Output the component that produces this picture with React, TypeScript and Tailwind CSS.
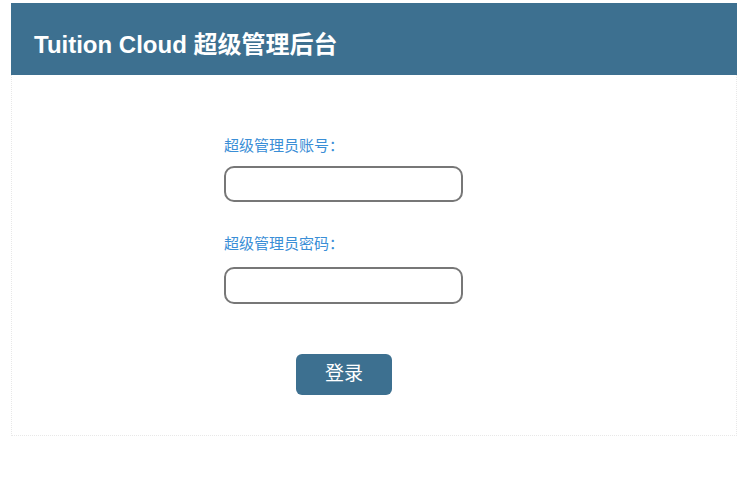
import React, { useState } from 'react';

export default function App() {
  const [account, setAccount] = useState('');
  const [password, setPassword] = useState('');

  return (
    <div className="min-h-[495px] bg-white pt-[3px] pl-[11px] font-['Liberation_Sans','Noto_Sans_CJK_SC',sans-serif]">
      <div className="w-[726px]">
        {/* header */}
        <div className="flex h-[72px] items-center bg-[#3d7090] pl-[23px] pt-[11px]">
          <h1 className="text-[24px] font-bold text-white">Tuition Cloud 超级管理后台</h1>
        </div>

        {/* login panel */}
        <div className="flex h-[361px] flex-col border-x border-b border-dotted border-[#e8e8e8] pl-[212px] pt-[61px]">
          <label className="text-[15px] leading-[20px] text-[#3a8ed6]">超级管理员账号：</label>
          <input
            type="text"
            value={account}
            onChange={(e) => setAccount(e.target.value)}
            className="mt-[10px] h-[36px] w-[239px] rounded-[10px] border-2 border-[#777] px-2 outline-none"
          />
          <label className="mt-[32px] text-[15px] leading-[20px] text-[#3a8ed6]">超级管理员密码：</label>
          <input
            type="password"
            value={password}
            onChange={(e) => setPassword(e.target.value)}
            className="mt-[13px] h-[37px] w-[239px] rounded-[10px] border-2 border-[#777] px-2 outline-none"
          />
          <button className="ml-[72px] mt-[50px] h-[41px] w-[96px] rounded-[6px] bg-[#3d7090] text-[19px] text-white">
            登录
          </button>
        </div>
      </div>
    </div>
  );
}
